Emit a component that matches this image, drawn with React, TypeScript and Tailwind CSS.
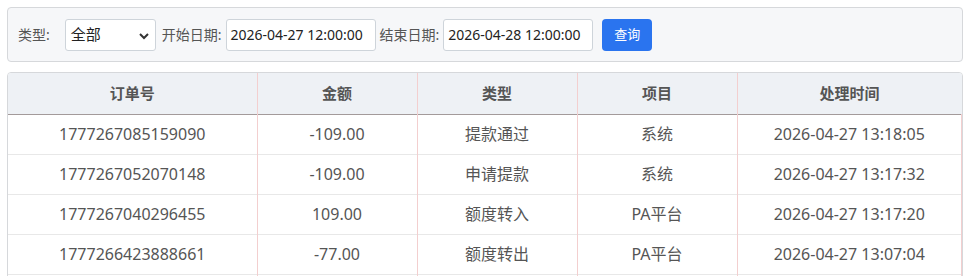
import React from 'react';

interface Record {
  orderNo: string;
  amount: string;
  type: string;
  project: string;
  time: string;
}

const records: Record[] = [
  { orderNo: '1777267085159090', amount: '-109.00', type: '提款通过', project: '系统', time: '2026-04-27 13:18:05' },
  { orderNo: '1777267052070148', amount: '-109.00', type: '申请提款', project: '系统', time: '2026-04-27 13:17:32' },
  { orderNo: '1777267040296455', amount: '109.00', type: '额度转入', project: 'PA平台', time: '2026-04-27 13:17:20' },
  { orderNo: '1777266423888661', amount: '-77.00', type: '额度转出', project: 'PA平台', time: '2026-04-27 13:07:04' },
];

const headers = ['订单号', '金额', '类型', '项目', '处理时间'];

const font = { fontFamily: '"Noto Sans", "Noto Sans CJK SC", sans-serif' };

const FilterBar = () => (
  <div className="flex items-center h-[55px] px-[10px] bg-[#f6f7f9] border border-[#d6d8db] rounded-[4px] text-[14px] text-[#555]">
    <span className="mr-[15px]">类型:</span>
    <div className="relative w-[91px] h-[32px] bg-white border border-[#ced4da] rounded-[3px] flex items-center pl-[5px] text-[15px] text-[#222]">
      全部
      <svg className="absolute right-[6px] top-[12px]" width="10" height="8" viewBox="0 0 10 8">
        <path d="M1 2 L5 6 L9 2" fill="none" stroke="#333" strokeWidth="2" />
      </svg>
    </div>
    <span className="ml-[6px] mr-[4px]">开始日期:</span>
    <div className="w-[150px] h-[32px] bg-white border border-[#ced4da] rounded-[3px] flex items-center pl-[4px] text-[14px] text-[#222]">
      2026-04-27 12:00:00
    </div>
    <span className="ml-[4px] mr-[4px]">结束日期:</span>
    <div className="w-[150px] h-[32px] bg-white border border-[#ced4da] rounded-[3px] flex items-center pl-[4px] text-[14px] text-[#222]">
      2026-04-28 12:00:00
    </div>
    <button
      type="button"
      className="ml-[9px] w-[50px] h-[32px] bg-[#2a74ef] rounded-[4px] text-white text-[13px]"
    >
      查询
    </button>
  </div>
);

const cell = 'text-center border-l border-[#f3cfcf]';

const RecordTable = () => (
  <div className="mt-[10px] border border-[#d6d8db] rounded-t-[4px] overflow-hidden">
    <table className="w-full table-fixed border-collapse text-[16px] text-[#555]">
      <colgroup>
        <col className="w-[249px]" />
        <col className="w-[160px]" />
        <col className="w-[160px]" />
        <col className="w-[160px]" />
        <col />
      </colgroup>
      <thead>
        <tr className="h-[41px] bg-[#eef1f5] border-b border-[#a39a9a]">
          {headers.map((h, i) => (
            <th
              key={h}
              className={`font-bold text-[15px] text-[#555] ${i > 0 ? 'border-l border-[#f3cfcf]' : ''}`}
            >
              {h}
            </th>
          ))}
        </tr>
      </thead>
      <tbody>
        {records.map((r) => (
          <tr key={r.orderNo} className="h-[40px] border-b border-[#e8e8e8]">
            <td className="text-center">{r.orderNo}</td>
            <td className={cell}>{r.amount}</td>
            <td className={cell}>{r.type}</td>
            <td className={cell}>{r.project}</td>
            <td className={`${cell} border-r`}>{r.time}</td>
          </tr>
        ))}
        <tr className="h-[40px]">
          <td />
          <td className={cell} />
          <td className={cell} />
          <td className={cell} />
          <td className={`${cell} border-r`} />
        </tr>
      </tbody>
    </table>
  </div>
);

export default function App() {
  return (
    <div className="bg-white h-[276px] overflow-hidden px-[7px] pt-[7px]" style={font}>
      <FilterBar />
      <RecordTable />
    </div>
  );
}
